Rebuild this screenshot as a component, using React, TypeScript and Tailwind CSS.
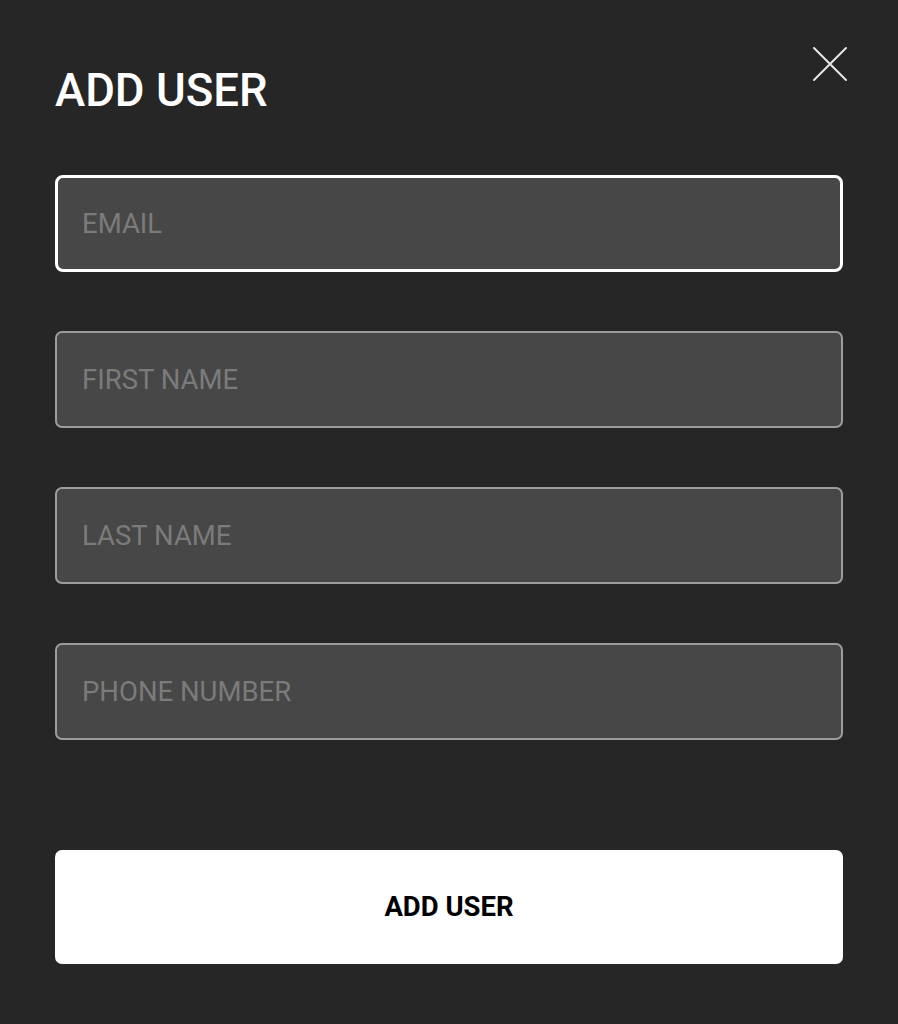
export default function App() {
  const fields = ['EMAIL', 'FIRST NAME', 'LAST NAME', 'PHONE NUMBER']

  return (
    <div className="min-h-screen bg-[#262626] px-[55px] pt-[46px] font-['Roboto',sans-serif]">
      <div className="flex items-start justify-between">
        <h1 className="mt-[22px] text-[45.5px] leading-none font-medium text-white">ADD USER</h1>
        <button type="button" aria-label="Close" className="-mr-[5px] h-9 w-9">
          <svg viewBox="0 0 36 36" className="h-9 w-9" fill="none" stroke="#e6e6e6" strokeWidth="2" strokeLinecap="round">
            <path d="M2 2 L34 34 M34 2 L2 34" />
          </svg>
        </button>
      </div>

      <form className="mt-[61px] flex flex-col gap-[59px]">
        {fields.map((f, i) => (
          <input
            key={f}
            type="text"
            placeholder={f}
            className={
              i === 0
                ? 'h-[97px] w-full rounded-[8px] border-[3px] border-white bg-[#474747] pl-[24px] text-[27.5px] text-white outline-none placeholder:text-[#7b7b7b]'
                : 'h-[97px] w-full rounded-[7px] border-2 border-[#9c9c9c] bg-[#474747] pl-[25px] text-[27.5px] text-white outline-none placeholder:text-[#7b7b7b]'
            }
          />
        ))}
      </form>

      <button
        type="button"
        className="mt-[110px] flex h-[114px] w-full items-center justify-center rounded-[7px] bg-white text-[27.5px] font-bold text-black"
      >
        ADD USER
      </button>
    </div>
  )
}
